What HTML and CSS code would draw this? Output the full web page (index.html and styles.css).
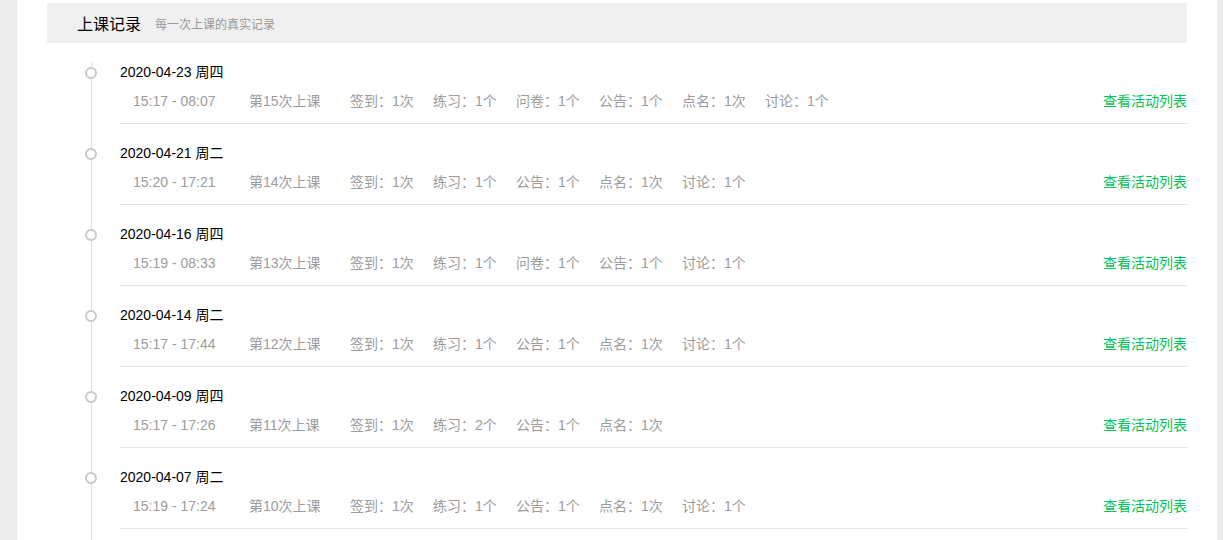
FILE: index.html
```html
<!DOCTYPE html>
<html lang="zh">
<head>
<meta charset="utf-8">
<link rel="stylesheet" href="styles.css">
</head>
<body>
<div class="panel">
  <div class="head">
    <span class="title">上课记录</span>
    <span class="sub">每一次上课的真实记录</span>
  </div>
  <div class="list">
    <div class="item">
      <div class="marker"><span class="dot"></span></div>
      <div class="content">
        <div class="date">2020-04-23 周四</div>
        <div class="row">
          <span class="time">15:17 - 08:07</span>
          <span class="count">第15次上课</span>
          <span class="stat">签到：1次</span>
          <span class="stat">练习：1个</span>
          <span class="stat">问卷：1个</span>
          <span class="stat">公告：1个</span>
          <span class="stat">点名：1次</span>
          <span class="stat">讨论：1个</span>
          <a class="link">查看活动列表</a>
        </div>
      </div>
    </div>
    <div class="item">
      <div class="marker"><span class="dot"></span></div>
      <div class="content">
        <div class="date">2020-04-21 周二</div>
        <div class="row">
          <span class="time">15:20 - 17:21</span>
          <span class="count">第14次上课</span>
          <span class="stat">签到：1次</span>
          <span class="stat">练习：1个</span>
          <span class="stat">公告：1个</span>
          <span class="stat">点名：1次</span>
          <span class="stat">讨论：1个</span>
          <a class="link">查看活动列表</a>
        </div>
      </div>
    </div>
    <div class="item">
      <div class="marker"><span class="dot"></span></div>
      <div class="content">
        <div class="date">2020-04-16 周四</div>
        <div class="row">
          <span class="time">15:19 - 08:33</span>
          <span class="count">第13次上课</span>
          <span class="stat">签到：1次</span>
          <span class="stat">练习：1个</span>
          <span class="stat">问卷：1个</span>
          <span class="stat">公告：1个</span>
          <span class="stat">讨论：1个</span>
          <a class="link">查看活动列表</a>
        </div>
      </div>
    </div>
    <div class="item">
      <div class="marker"><span class="dot"></span></div>
      <div class="content">
        <div class="date">2020-04-14 周二</div>
        <div class="row">
          <span class="time">15:17 - 17:44</span>
          <span class="count">第12次上课</span>
          <span class="stat">签到：1次</span>
          <span class="stat">练习：1个</span>
          <span class="stat">公告：1个</span>
          <span class="stat">点名：1次</span>
          <span class="stat">讨论：1个</span>
          <a class="link">查看活动列表</a>
        </div>
      </div>
    </div>
    <div class="item">
      <div class="marker"><span class="dot"></span></div>
      <div class="content">
        <div class="date">2020-04-09 周四</div>
        <div class="row">
          <span class="time">15:17 - 17:26</span>
          <span class="count">第11次上课</span>
          <span class="stat">签到：1次</span>
          <span class="stat">练习：2个</span>
          <span class="stat">公告：1个</span>
          <span class="stat">点名：1次</span>
          <a class="link">查看活动列表</a>
        </div>
      </div>
    </div>
    <div class="item">
      <div class="marker"><span class="dot"></span></div>
      <div class="content">
        <div class="date">2020-04-07 周二</div>
        <div class="row">
          <span class="time">15:19 - 17:24</span>
          <span class="count">第10次上课</span>
          <span class="stat">签到：1次</span>
          <span class="stat">练习：1个</span>
          <span class="stat">公告：1个</span>
          <span class="stat">点名：1次</span>
          <span class="stat">讨论：1个</span>
          <a class="link">查看活动列表</a>
        </div>
      </div>
    </div>
  </div>
</div>
</body>
</html>
```

FILE: styles.css
```css
html, body {
  margin: 0;
  padding: 0;
  background: #ececec;
  height: 540px;
  overflow: hidden;
}
body {
  font-family: "Liberation Sans", Arial, "Noto Sans CJK SC", sans-serif;
}
.panel {
  margin-left: 17px;
  width: 1200px;
  background: #fff;
  padding-top: 3px;
  height: 537px;
}
.head {
  margin: 0 30px;
  height: 40px;
  background: #f0f0f0;
  display: flex;
  align-items: center;
  padding-left: 30px;
}
.title {
  font-size: 16px;
  color: #000;
}
.sub {
  font-size: 12px;
  color: #999;
  margin-left: 14px;
}
.list {
  position: relative;
  margin: 0 30px;
  height: 497px;
}
.list::before {
  content: "";
  position: absolute;
  left: 44px;
  top: 19px;
  bottom: 0;
  width: 1px;
  background: #e0e0e0;
}
.item {
  display: flex;
}
.marker {
  width: 73px;
  flex: none;
  padding-top: 24px;
  padding-left: 38px;
  box-sizing: border-box;
  position: relative;
}
.dot {
  display: block;
  width: 12px;
  height: 12px;
  box-sizing: border-box;
  border: 2px solid #c8c8c8;
  border-radius: 50%;
  background: #fff;
  position: relative;
  z-index: 1;
}
.content {
  flex: 1;
  padding: 19px 0 12px;
  border-bottom: 1px solid #e5e5e5;
}
.date {
  font-size: 14px;
  line-height: 20px;
  color: #000;
}
.row {
  display: flex;
  align-items: center;
  margin-top: 9px;
  padding-left: 13px;
  font-size: 14px;
  line-height: 20px;
  color: #9c9c9c;
}
.time {
  width: 116px;
  flex: none;
}
.count {
  width: 101px;
  flex: none;
}
.stat {
  width: 83px;
  flex: none;
}
.link {
  margin-left: auto;
  color: #00c45a;
  cursor: pointer;
}
```
